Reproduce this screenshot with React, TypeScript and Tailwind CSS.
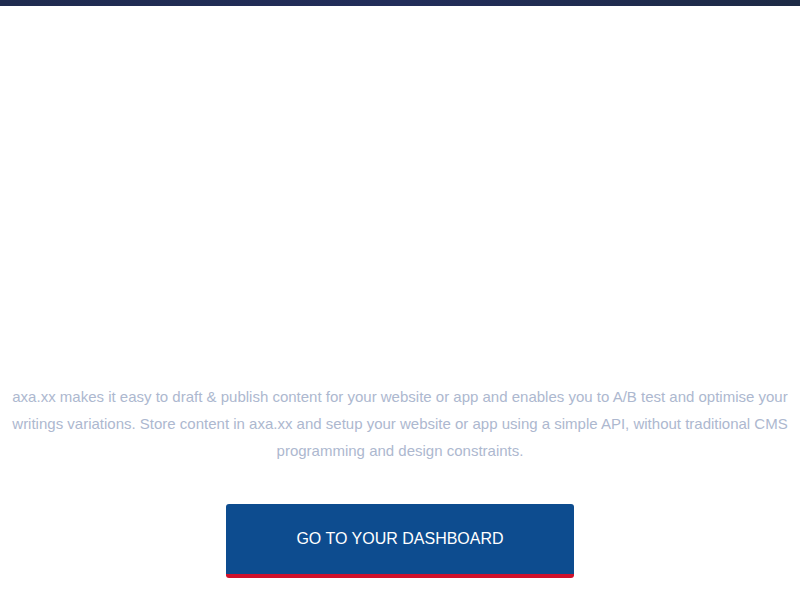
import React from 'react';

const App: React.FC = () => {
  return (
    <div className="min-h-[600px] bg-white font-['Liberation_Sans',Arial,sans-serif]">
      <div className="h-[6px] bg-gradient-to-r from-[#1f2b4f] via-[#222d5a] to-[#1d2a45]" />
      <main className="flex flex-col items-center px-[10px] pt-[377px]">
        <p className="text-center text-[15px] leading-[27px] text-[#adb8cf]">
          axa.xx makes it easy to draft &amp; publish content for your website or app and enables you to A/B test and optimise your writings variations. Store content in axa.xx and setup your website or app using a simple API, without traditional CMS programming and design constraints.
        </p>
        <button className="mt-[40px] flex h-[74px] w-[348px] items-center justify-center rounded-[3px] border-b-4 border-[#d0112b] bg-[#0d4c8f] text-[16px] uppercase text-white">
          Go to your dashboard
        </button>
      </main>
    </div>
  );
};

export default App;
